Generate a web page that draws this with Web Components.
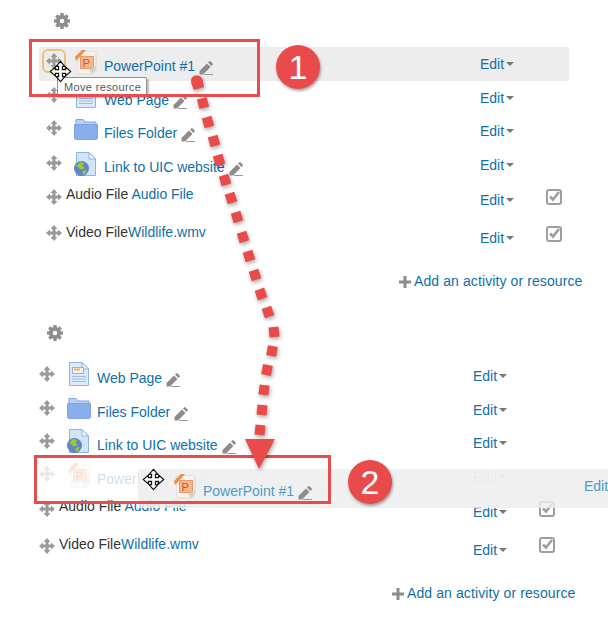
<!DOCTYPE html>
<html>
<head>
<meta charset="utf-8">
<title>Move resource</title>
<style>
  html, body { margin: 0; padding: 0; }
  body {
    width: 608px;
    height: 623px;
    position: relative;
    overflow: hidden;
    background: #fff;
    font: 14px/20px "Liberation Sans", Arial, sans-serif;
    color: #333;
  }
  a { color: var(--link, #0f6fa8); text-decoration: none; }
</style>
</head>
<body>
<course-section style="margin-left:39px;height:312px">
  <course-row icon="ppt" active style="--h:34px"><a>PowerPoint #1</a></course-row>
  <course-row icon="page" style="--h:33px"><a>Web Page</a></course-row>
  <course-row icon="folder" style="--h:34px;--i:5px"><a>Files Folder</a></course-row>
  <course-row icon="link" style="--h:34px;--i:4px;--m:7px"><a>Link to UIC website</a></course-row>
  <course-row check style="--h:37px;--t:2px;--e:8px;--m:7px;--c:7px">Audio File <a>Audio File</a></course-row>
  <course-row check style="--h:38px;--t:3px;--e:9px;--m:6px;--c:7px">Video File<a>Wildlife.wmv</a></course-row>
  <add-activity></add-activity>
</course-section>

<course-section style="margin-left:32px;height:311px">
  <course-row icon="page" style="--h:34px;--m:7px"><a>Web Page</a></course-row>
  <course-row icon="folder" style="--h:33px;--m:7px;--i:5px"><a>Files Folder</a></course-row>
  <course-row icon="link" style="--h:34px;--m:7px"><a>Link to UIC website</a></course-row>
  <course-row icon="ppt" faded style="--h:33px"><a>PowerPoint #1</a></course-row>
  <course-row check style="--h:38px;--t:3px;--e:9px;--m:8px;--c:8px">Audio File <a>Audio File</a></course-row>
  <course-row check style="--h:38px;--t:3px;--e:9px;--m:7px;--c:6px">Video File<a>Wildlife.wmv</a></course-row>
  <add-activity></add-activity>
</course-section>

<drag-ghost>
  <course-row icon="ppt" style="--h:39px;--name-w:419px;--t:12px;--e:7px;--m:4px;--i:5px;--link:#4d9bc6"><a>PowerPoint #1</a></course-row>
</drag-ghost>
<move-tip>Move resource</move-tip>
<callout-box style="left:29px;top:39px;width:225px;height:52px"></callout-box>
<callout-box style="left:34px;top:455px;width:291px;height:43px"></callout-box>
<drag-arrow></drag-arrow>
<step-badge style="left:276px;top:45px">1</step-badge>
<step-badge style="left:348px;top:460px">2</step-badge>
<move-cursor style="left:49px;top:60px"></move-cursor>
<move-cursor style="left:142px;top:468px"></move-cursor>

<script>
const MOVE_PATH = "M8 0L11.5 4H9.5V6.5H12V4.5L16 8L12 11.5V9.5H9.5V12H11.5L8 16L4.5 12H6.5V9.5H4V11.5L0 8L4 4.5V6.5H6.5V4H4.5Z";

const docShape = (fill, stroke) => `
  <path d="M2.500 .5H15L21.500 7V23.500H2.500Z" fill="${fill}" stroke="${stroke}"/>
  <path d="M15 .5V7H21.500Z" fill="#f4f8fe" stroke="${stroke}"/>`;

const ICONS = {
  ppt: `<svg width="24" height="25" viewBox="0 0 24 25">
    <path d="M3 1H21L23 3V20L19 25H4L3 23Z" fill="#e6e2dc"/>
    <path d="M4 2H21V20L18 23H4Z" fill="#f6f2ed"/>
    <path d="M1 7L8 0H12L2 11Z" fill="#ee8c50"/>
    <rect x="6.500" y="6.500" width="13" height="12" fill="#f4b68c" stroke="#ea9a68"/>
    <text x="8.500" y="16.500" font-family="Liberation Sans" font-size="11" fill="#cf5526">P</text>
    <path d="M15 20L22 16V20L18 24Z" fill="#d5d0c9"/>
  </svg>`,
  page: `<svg width="24" height="25" viewBox="0 0 24 25">
    ${docShape("#dceafc", "#8db3ea")}
    <rect x="5.500" y="5.500" width="11" height="6" fill="#f7f3e4" stroke="#8db3ea"/>
    <path d="M7 7.500H13" stroke="#e4b66b" stroke-width="2"/>
    <path d="M5 14.500H19M5 17H19M5 19.500H19" stroke="#9fbdeb"/>
  </svg>`,
  folder: `<svg width="24" height="21" viewBox="0 0 24 21">
    <path d="M2 .5H9L11 3H22V6H2Z" fill="#b9d0f3" stroke="#7fa5e3"/>
    <path d="M.5 5.500H23.500V19.500L22 20.500H2L.5 19.500Z" fill="#8aaeec" stroke="#7ea3e4"/>
  </svg>`,
  link: `<svg width="24" height="25" viewBox="0 0 24 25">
    ${docShape("#d3e5fb", "#8db3ea")}
    <circle cx="7.500" cy="16.500" r="7.500" fill="#5f86c8"/>
    <path d="M2.500 13.500L6.500 10L10.500 11L8.500 13.500L10.500 16.500L6.500 17.500L4.500 15.500ZM8.500 19.500L12.500 17.500L11.500 21.500L8.500 22.500Z" fill="#a3c72e"/>
  </svg>`
};

class CourseSection extends HTMLElement {
  constructor() {
    super();
    this.shadowDOM = this.attachShadow({ mode: "open" });
  }

  connectedCallback() {
    this.render();
  }

  render() {
    this.shadowDOM.innerHTML = `
      <style>
        :host { display: block; width: 530px; }
        .gear { padding: 13px 0 18px 15px; }
        svg { display: block; }
      </style>
      <div class="gear">
        <svg width="16" height="16" viewBox="0 0 16 16">
          <circle cx="8" cy="8" r="4.2" fill="none" stroke="#8d8d8d" stroke-width="3.8"/>
          ${[0, 45, 90, 135, 180, 225, 270, 315].map(a =>
            `<rect x="6.300" y="0" width="3.4" height="3" fill="#8d8d8d" transform="rotate(${a} 8 8)"/>`).join("")}
        </svg>
      </div>
      <slot></slot>
    `;
  }
}

class CourseRow extends HTMLElement {
  constructor() {
    super();
    this.shadowDOM = this.attachShadow({ mode: "open" });
  }

  connectedCallback() {
    this.render();
  }

  render() {
    const icon = this.getAttribute("icon");
    const pencil = icon ? `
      <svg class="pencil" width="14" height="14" viewBox="0 0 14 14">
        <path d="M.5 13.500V10L8 2.500L11.500 6L4 13.500Z" fill="#8c8c8c"/>
        <path d="M9 1.500L10 .5C10.500 0 11.200 0 11.700 .5L13.500 2.300C14 2.800 14 3.500 13.500 4L12.500 5Z" fill="#8c8c8c"/>
        <path d="M5 13.500H14" stroke="#9a9a9a"/>
      </svg>` : "";
    const check = this.hasAttribute("check") ? `
      <svg class="check" width="16" height="16" viewBox="0 0 16 16">
        <rect x="1" y="1" width="14" height="14" rx="2" fill="#fff" stroke="#9e9e9e" stroke-width="2"/>
        <path d="M4 7.500L7 10.500L13 3" fill="none" stroke="#9e9e9e" stroke-width="2.600"/>
      </svg>` : "";
    this.shadowDOM.innerHTML = `
      <style>
        :host {
          display: grid;
          grid-template-columns: 27px var(--name-w, 414px) 66px 1fr;
          align-items: start;
          height: var(--h, 34px);
        }
        :host([active]) { background: #ededed; }
        :host([faded]) .cell { opacity: .22; }
        svg { display: block; flex: none; }
        .move { margin: var(--m, 6px) 0 0 7px; }
        :host([active]) .move {
          outline: 2px solid #edc27d;
          outline-offset: 2px;
          border-radius: 2px;
        }
        .name { display: flex; align-items: flex-start; white-space: nowrap; }
        .icon { width: 30px; margin: var(--i, 3px) 0 0 8px; flex: none; }
        .icon svg { overflow: visible; }
        .label { margin-top: var(--t, 9px); }
        .pencil { margin: calc(var(--t, 9px) + 5px) 0 0 4px; }
        .edit {
          display: flex;
          align-items: center;
          gap: 2px;
          margin-top: var(--e, 7px);
          color: var(--link, #0f6fa8);
        }
        .caret {
          width: 0;
          height: 0;
          border: 4px solid transparent;
          border-top-color: #777;
          border-bottom: 0;
        }
        .check { margin-top: var(--c, 7px); }
      </style>
      <div class="cell"><svg class="move" width="16" height="16" viewBox="0 0 16 16"><path d="${MOVE_PATH}" fill="#9a9a9a"/></svg></div>
      <div class="cell name">
        ${icon ? `<div class="icon">${ICONS[icon]}</div>` : ""}
        <div class="label"><slot></slot></div>
        ${pencil}
      </div>
      <div class="cell edit">Edit<span class="caret"></span></div>
      <div class="cell">${check}</div>
    `;
  }
}

class AddActivity extends HTMLElement {
  constructor() {
    super();
    this.shadowDOM = this.attachShadow({ mode: "open" });
  }

  connectedCallback() {
    this.shadowDOM.innerHTML = `
      <style>
        :host {
          display: flex;
          align-items: center;
          gap: 3px;
          margin: 14px 0 0 360px;
          white-space: nowrap;
          letter-spacing: .1px;
          color: #0f6fa8;
        }
        svg { display: block; flex: none; margin-top: 2px; }
      </style>
      <svg width="12" height="12" viewBox="0 0 12 12"><path d="M4.500 0H7.500V4.500H12V7.500H7.500V12H4.500V7.500H0V4.500H4.500Z" fill="#8d8d8d"/></svg>
      <span>Add an activity or resource</span>
    `;
  }
}

class DragGhost extends HTMLElement {
  constructor() {
    super();
    this.attachShadow({ mode: "open" }).innerHTML = `
      <style>
        :host {
          display: block;
          position: absolute;
          left: 138px;
          top: 469px;
          width: 470px;
          height: 39px;
          overflow: hidden;
          background: rgba(237, 237, 237, .84);
        }
        ::slotted(*) { width: 530px; }
      </style>
      <slot></slot>
    `;
  }
}

class MoveTip extends HTMLElement {
  constructor() {
    super();
    this.attachShadow({ mode: "open" }).innerHTML = `
      <style>
        :host {
          display: block;
          position: absolute;
          left: 57px;
          top: 77px;
          width: 82px;
          height: 17px;
          padding-left: 6px;
          background: #fff;
          border: 1px solid #8f8f8f;
          border-top-right-radius: 2px;
          box-shadow: 2px 2px 2px rgba(0, 0, 0, .25);
          font: 11px/18px "Liberation Sans", Arial, sans-serif;
          letter-spacing: .35px;
          color: #575757;
          white-space: nowrap;
        }
      </style>
      <slot></slot>
    `;
  }
}

class CalloutBox extends HTMLElement {
  constructor() {
    super();
    this.attachShadow({ mode: "open" }).innerHTML = `
      <style>
        :host {
          display: block;
          position: absolute;
          border: 3px solid #e84c4c;
        }
      </style>
    `;
  }
}

class StepBadge extends HTMLElement {
  constructor() {
    super();
    this.attachShadow({ mode: "open" }).innerHTML = `
      <style>
        :host {
          display: grid;
          place-items: center;
          position: absolute;
          width: 44px;
          height: 44px;
          border-radius: 50%;
          background: #e94b4b;
          box-shadow: 1px 2px 3px rgba(0, 0, 0, .35);
          color: #fff;
          font: 34px/44px "Liberation Sans", Arial, sans-serif;
        }
      </style>
      <slot></slot>
    `;
  }
}

class MoveCursor extends HTMLElement {
  constructor() {
    super();
    this.attachShadow({ mode: "open" }).innerHTML = `
      <style>
        :host { display: block; position: absolute; width: 23px; height: 23px; }
        svg { display: block; }
      </style>
      <svg width="23" height="23" viewBox="-1 -1 18 18">
        <path d="${MOVE_PATH}" fill="#fff" stroke="#111" stroke-width=".9"/>
      </svg>
    `;
  }
}

class DragArrow extends HTMLElement {
  constructor() {
    super();
    const points = [[203, 103], [208, 122], [214, 141], [219, 160], [225, 180], [231, 198], [237, 217],
      [243, 237], [249, 256], [255, 275], [261, 294], [268, 312], [274, 332], [272, 351], [267, 370],
      [264, 390], [262, 410], [260, 430]];
    const dashes = points.map(([x, y], i) => {
      const [px, py] = points[Math.max(i - 1, 0)];
      const [nx, ny] = points[Math.min(i + 1, points.length - 1)];
      const angle = Math.atan2(ny - py, nx - px) * 180 / Math.PI - 90;
      return `<rect x="${x - 5}" y="${y - 5}" width="10" height="10" transform="rotate(${angle.toFixed(1)} ${x} ${y})"/>`;
    }).join("");
    this.attachShadow({ mode: "open" }).innerHTML = `
      <style>
        :host { display: block; position: absolute; left: 0; top: 0; width: 608px; height: 623px; }
        svg { display: block; fill: #e94b4b; filter: drop-shadow(1px 2px 2px rgba(0, 0, 0, .35)); }
      </style>
      <svg width="608" height="623" viewBox="0 0 608 623">
        <path d="M191.500 84C190 78 193 75.500 197 75.500C201 75.500 203 79 203 82L204 87L194 90Z"/>
        ${dashes}
        <path d="M245 439H275L259 469Z"/>
      </svg>
    `;
  }
}

customElements.define("course-section", CourseSection);
customElements.define("course-row", CourseRow);
customElements.define("add-activity", AddActivity);
customElements.define("drag-ghost", DragGhost);
customElements.define("move-tip", MoveTip);
customElements.define("callout-box", CalloutBox);
customElements.define("step-badge", StepBadge);
customElements.define("move-cursor", MoveCursor);
customElements.define("drag-arrow", DragArrow);
</script>
</body>
</html>
